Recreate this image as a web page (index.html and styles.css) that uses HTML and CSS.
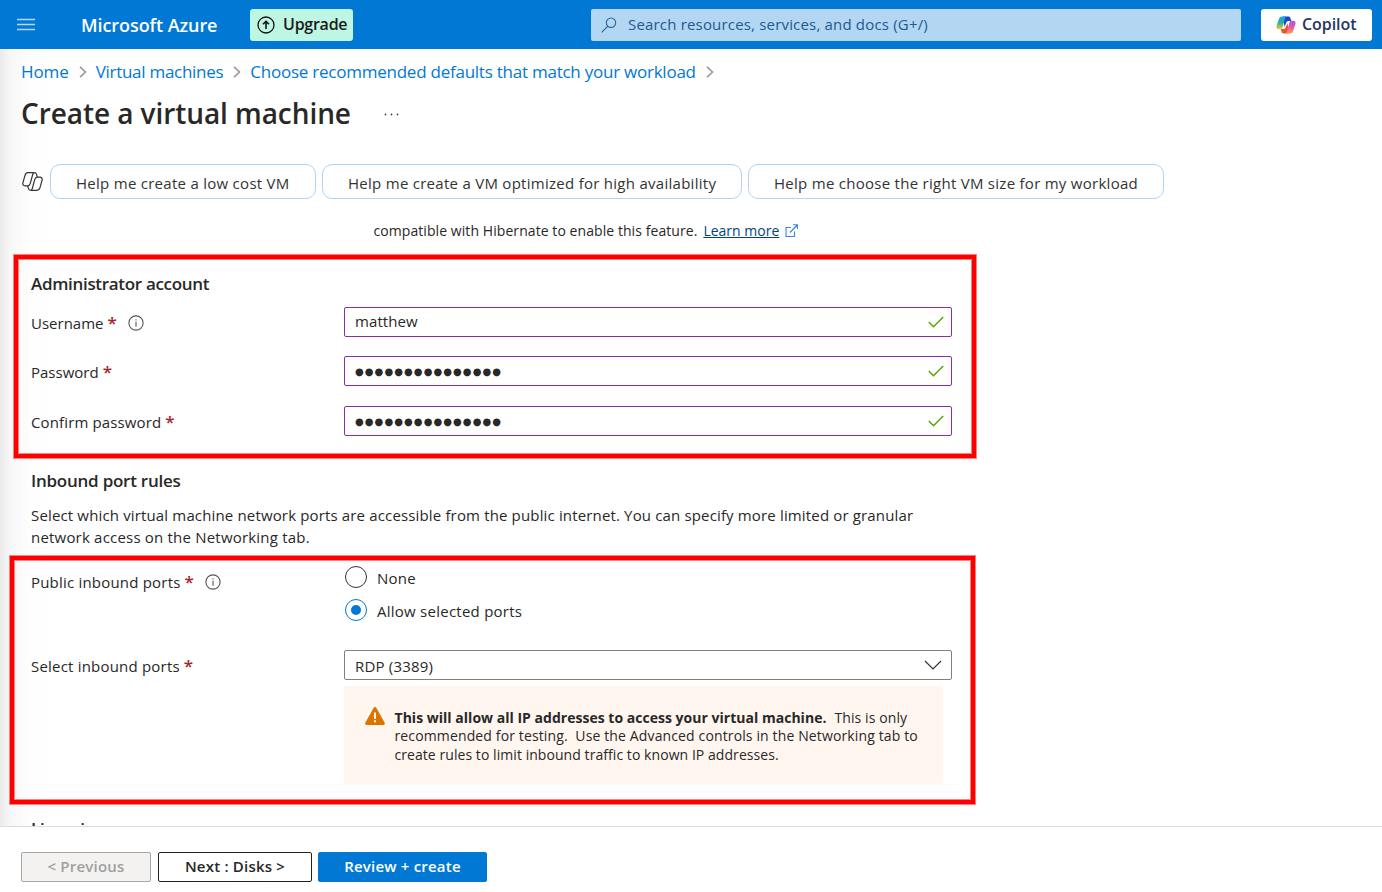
FILE: index.html
```html
<!DOCTYPE html>
<html lang="en">
<head>
<meta charset="utf-8">
<title>Create a virtual machine - Microsoft Azure</title>
<link rel="stylesheet" href="styles.css">
</head>
<body>
<header class="topbar">
  <svg class="menu" viewBox="0 0 18 13"><path d="M0 1.500h18M0 6.500h18M0 11.500h18" fill="none" stroke="#b5d8f5" stroke-width="1.400"/></svg>
  <span class="brand"><span class="t t-brand">Microsoft Azure</span></span>
  <button class="upgrade">
    <svg viewBox="0 0 18 18" fill="none" stroke="#111" stroke-width="1.300"><circle cx="9" cy="9" r="8"/><path d="M9 13V5.500M6 8.300l3-3 3 3" stroke-width="1.600"/></svg>
    <span class="t t-upgrade">Upgrade</span>
  </button>
  <div class="search">
    <svg viewBox="0 0 16 16" fill="none" stroke="#2a6397" stroke-width="1.100"><circle cx="10" cy="5.700" r="4.700"/><path d="M6.800 9.200L.7 15.300"/></svg>
    <span class="t t-search">Search resources, services, and docs (G+/)</span>
  </div>
  <button class="copilot">
    <svg viewBox="0 0 20 18">
      <defs>
        <linearGradient id="ga" x1="0" y1="0" x2="0" y2="1"><stop offset="0" stop-color="#1aa5ee"/><stop offset=".5" stop-color="#2fae9c"/><stop offset="1" stop-color="#f3cf22"/></linearGradient>
        <linearGradient id="gb" x1="0" y1="0" x2="0" y2="1"><stop offset="0" stop-color="#a75be8"/><stop offset=".5" stop-color="#e8579c"/><stop offset="1" stop-color="#ff9a5a"/></linearGradient>
      </defs>
      <path d="M7 .5h5.200c1.200 0 1.900.6 2.200 1.700l.9 2.800h-2.800c-1.400 0-2 .7-2.400 2L8.500 11z" fill="#1b48c4"/>
      <path d="M13 17.500H7.800c-1.200 0-1.900-.6-2.200-1.700L4.700 13h2.800c1.400 0 2-.7 2.400-2l1.600-4z" fill="#f0522e"/>
      <path d="M6 .5h4.600c-1 .4-1.400 1.200-1.700 2.200L6.700 11c-.4 1.500-1 2.200-2.500 2.200H2.800C.8 13.200 0 11.800.6 9.800L3 2.700C3.500 1.200 4.500.5 6 .5z" fill="url(#ga)"/>
      <path d="M14 17.500H9.400c1-.4 1.400-1.200 1.700-2.200L13.300 7c.4-1.500 1-2.200 2.500-2.200h1.400c2 0 2.800 1.400 2.200 3.400L17 15.300c-.5 1.500-1.500 2.200-3 2.200z" fill="url(#gb)"/>
    </svg>
    <span class="t t-copilot">Copilot</span>
  </button>
</header>

<main class="page">
  <nav class="crumbs">
    <a class="t t-c1">Home</a>
    <svg class="sep" viewBox="0 0 8 12"><path d="M1 .8L6.500 6 1 11.200"/></svg>
    <a class="t t-c2">Virtual machines</a>
    <svg class="sep" viewBox="0 0 8 12"><path d="M1 .8L6.500 6 1 11.200"/></svg>
    <a class="t t-c3">Choose recommended defaults that match your workload</a>
    <svg class="sep" viewBox="0 0 8 12"><path d="M1 .8L6.500 6 1 11.200"/></svg>
  </nav>
  <div class="title-row">
    <h1 class="t t-title">Create a virtual machine</h1>
    <svg class="dots" viewBox="0 0 15 3"><circle cx="1.500" cy="1.500" r=".9"/><circle cx="7.500" cy="1.500" r=".9"/><circle cx="13.500" cy="1.500" r=".9"/></svg>
  </div>
  <div class="chips">
    <svg class="chip-icon" viewBox="0 0 21 19" fill="none" stroke="#333" stroke-width="1.200"><path d="M6 .7h6.500c-1 .2-1.500.8-1.800 1.800L8.200 11.700c-.4 1.400-1.200 2.100-2.600 2.100H3.200C1.300 13.800.4 12.500.9 10.800L3 3.300C3.500 1.500 4.500.7 6 .7z"/><path d="M15 18.300H8.500c1-.2 1.500-.8 1.800-1.800l2.500-9.200c.4-1.400 1.200-2.100 2.600-2.100h2.400c1.900 0 2.800 1.300 2.300 3L18 15.700c-.5 1.800-1.500 2.600-3 2.600z"/><path d="M12.500.7c1.200 0 1.700.7 2 1.700l.8 2.800M8.500 18.300c-1.200 0-1.700-.7-2-1.700l-.8-2.800"/></svg>
    <button class="chip chip-a"><span class="t t-k1">Help me create a low cost VM</span></button>
    <button class="chip chip-b"><span class="t t-k2">Help me create a VM optimized for high availability</span></button>
    <button class="chip chip-c"><span class="t t-k3">Help me choose the right VM size for my workload</span></button>
  </div>

  <p class="hibernate"><span class="t t-hib">compatible with Hibernate to enable this feature.</span><a class="t t-learn">Learn more</a><svg viewBox="0 0 13 13" fill="none" stroke="#3b82e8" stroke-width="1.100"><path d="M6 3.500H1v9h8.500v-5M5 8.500L12.200 1M8 .7h4.400V5"/></svg></p>

  <section class="mark mark-account">
    <h2 class="t t-h1">Administrator account</h2>
    <div class="field first">
      <label><span class="t t-l1">Username</span><b class="req">*</b><svg class="info" viewBox="0 0 16 16"><circle cx="8" cy="8" r="7.100"/><path d="M8 6.800v5M8 4.200v1.300"/></svg></label>
      <div class="input"><span class="t t-user">matthew</span><svg class="check" viewBox="0 0 16 12"><path d="M.8 6l4.700 4.700L15.200 1"/></svg></div>
    </div>
    <div class="field">
      <label><span class="t t-l2">Password</span><b class="req">*</b></label>
      <div class="input"><span class="secret">●●●●●●●●●●●●●●●</span><svg class="check" viewBox="0 0 16 12"><path d="M.8 6l4.700 4.700L15.200 1"/></svg></div>
    </div>
    <div class="field">
      <label><span class="t t-l3">Confirm password</span><b class="req">*</b></label>
      <div class="input"><span class="secret">●●●●●●●●●●●●●●●</span><svg class="check" viewBox="0 0 16 12"><path d="M.8 6l4.700 4.700L15.200 1"/></svg></div>
    </div>
  </section>

  <section class="rules">
    <h2 class="t t-h2">Inbound port rules</h2>
    <p><span class="t t-p1">Select which virtual machine network ports are accessible from the public internet. You can specify more limited or granular</span><br><span class="t t-p2">network access on the Networking tab.</span></p>
  </section>

  <section class="mark mark-ports">
    <div class="port-field">
      <label><span class="t t-l4">Public inbound ports</span><b class="req">*</b><svg class="info" viewBox="0 0 16 16"><circle cx="8" cy="8" r="7.100"/><path d="M8 6.800v5M8 4.200v1.300"/></svg></label>
      <div class="radios">
        <div class="radio"><i></i><span class="t t-r1">None</span></div>
        <div class="radio on"><i></i><span class="t t-r2">Allow selected ports</span></div>
      </div>
    </div>
    <div class="field select-field">
      <label><span class="t t-l5">Select inbound ports</span><b class="req">*</b></label>
      <div class="input select"><span class="t t-rdp">RDP (3389)</span><svg class="chev" viewBox="0 0 18 10"><path d="M1 1l8 8 8-8"/></svg></div>
    </div>
    <div class="warning">
      <svg viewBox="0 0 20 18"><path d="M8.700.8a1.500 1.500 0 0 1 2.600 0l8.400 14.900a1.500 1.500 0 0 1-1.300 2.200H1.600a1.500 1.500 0 0 1-1.300-2.200z" fill="#db7500"/><path d="M10 5.500v6.200M10 13.200v2" stroke="#fff" stroke-width="1.900"/></svg>
      <p><b class="t t-w0">This will allow all IP addresses to access your virtual machine.</b><span class="t t-w1">This is only</span><br><span class="t t-w2">recommended for testing.&nbsp; Use the Advanced controls in the Networking tab to</span><br><span class="t t-w3">create rules to limit inbound traffic to known IP addresses.</span></p>
    </div>
  </section>
  <div class="cut"><h2 class="t t-h3">Licensing</h2></div>
</main>

<footer class="actions">
  <button class="btn prev"><span class="t">&lt; Previous</span></button>
  <button class="btn next"><span class="t">Next : Disks &gt;</span></button>
  <button class="btn review"><span class="t">Review + create</span></button>
</footer>
</body>
</html>
```
FILE: styles.css
```css
* { box-sizing: border-box; }
body { margin: 0; width: 1382px; height: 892px; overflow: hidden; display: flex; flex-direction: column; background: #fff; color: #292827; font-family: "Open Sans", "Noto Sans", sans-serif; font-size: 15px; }
h1, h2, p { margin: 0; font-size: inherit; }
button { font: inherit; margin: 0; padding: 0; border: 0; }
svg { display: block; flex: none; }
.t { white-space: nowrap; }

.topbar { flex: none; height: 49px; background: #0078d4; display: flex; align-items: center; padding: 0 10px 0 17px; }
.menu { width: 18px; height: 13px; }
.brand { width: 169px; margin-left: 46px; color: #fff; font-size: 18px; font-weight: 600; letter-spacing: -.07px; }
.upgrade { width: 103px; height: 32px; background: #bdf6e3; border-radius: 3px; display: flex; align-items: center; padding-left: 7px; gap: 8px; color: #1b1b1b; font-size: 16px; font-weight: 600; letter-spacing: -.25px; }
.upgrade svg { width: 18px; height: 18px; }
.upgrade .t, .copilot .t { margin-top: -2px; }
.search { width: 650px; height: 32px; margin-left: 238px; background: #b3d7f2; border-radius: 2px; display: flex; align-items: center; padding-left: 10px; gap: 11px; color: #205a91; }
.search svg { width: 16px; height: 16px; }
.t-search { letter-spacing: .18px; margin-top: -2px; }
.copilot { width: 111px; height: 32px; margin-left: 20px; background: #fff; border-radius: 3px; display: flex; align-items: center; padding-left: 15px; gap: 6px; color: #26355f; font-size: 16px; font-weight: 600; letter-spacing: -.07px; }
.copilot svg { width: 20px; height: 18px; }

.page { flex: none; height: 777px; overflow: hidden; background: linear-gradient(90deg, #ebebeb 0, #f7f7f7 10px, #fdfdfd 28px, #fff 50px); }
.crumbs { height: 46px; display: flex; align-items: center; padding-left: 21px; font-size: 17px; color: #0078d4; }
.crumbs .t { margin-top: -1px; }
.t-c1 { letter-spacing: -.1px; }
.t-c2 { letter-spacing: -.28px; }
.t-c3 { letter-spacing: -.24px; }
.sep { width: 8px; height: 12px; margin: 0 9px 0 10px; fill: none; stroke: #999; stroke-width: 1.600; }
.title-row { height: 38px; display: flex; align-items: center; padding-left: 21px; }
.t-title { font-size: 28px; font-weight: 600; width: 363px; letter-spacing: -.07px; margin-top: -2px; }
.dots { width: 15px; height: 3px; fill: #444; }
.chips { height: 35px; margin-top: 31px; padding-left: 22px; display: flex; align-items: center; }
.chip-icon { width: 21px; height: 19px; margin-right: 7px; }
.chip { height: 35px; border: 1px solid #b0d3f8; border-radius: 10px; background: transparent; padding: 3px 0 0 25px; text-align: left; color: #333; margin-right: 6px; letter-spacing: .275px; }
.chip-a { width: 266px; }
.chip-b { width: 420px; }
.chip-c { width: 416px; }
.hibernate { height: 56px; padding: 7px 0 0 373.500px; display: flex; align-items: center; font-size: 14px; }
.t-hib { letter-spacing: .07px; }
.t-learn { color: #004578; text-decoration: underline; margin-left: 6px; }
.hibernate svg { width: 13px; height: 13px; margin: -1px 0 0 6px; }

.mark { border: 4px solid #f00; box-shadow: 0 0 0 1px #ff8080, inset 0 0 0 1px #ff8080; }
.mark-account { width: 962px; height: 203px; margin-left: 14px; padding: 13px 0 0 13px; }
h2 { font-size: 17px; font-weight: 600; line-height: 24px; letter-spacing: -.32px; }
.t-h2 { letter-spacing: -.24px; }
.field { display: flex; height: 50px; }
.field.first { height: 49px; }
.mark-account h2 { margin-bottom: 11px; }
label { width: 313px; height: 32px; display: flex; align-items: center; }
.t-l3 { letter-spacing: .13px; }
.t-l4, .t-l5 { letter-spacing: .2px; }
.req { color: #a4262c; font-size: 17px; font-weight: 600; line-height: 20px; margin-left: 4px; }
.info { width: 16px; height: 16px; margin-left: 11.500px; fill: none; stroke: #555; stroke-width: 1.100; }
.input { width: 608px; height: 30px; border: 1px solid #8a2da5; border-radius: 2px; background: #fff; display: flex; align-items: center; justify-content: space-between; padding: 0 7px 0 10px; }
.t-user { margin-top: -2px; letter-spacing: .08px; }
.check { width: 16px; height: 12px; margin-top: -1px; fill: none; stroke: #57a300; stroke-width: 1.400; }
.secret { font-family: "DejaVu Sans", sans-serif; font-size: 10px; letter-spacing: 1.080px; margin-top: 1px; }
.rules { height: 98px; padding: 11px 0 0 31px; }
.rules p { margin-top: 11px; line-height: 22px; }
.t-p1 { letter-spacing: .152px; }
.t-p2 { letter-spacing: .2px; }
.mark-ports { width: 965px; height: 248px; margin-left: 10px; padding: 4px 0 0 17px; }
.port-field { height: 86px; display: flex; }
.port-field label { height: 35px; }
.radios { margin-top: -3px; }
.radio { display: flex; align-items: center; gap: 10px; height: 33px; letter-spacing: .25px; }
.radio i { width: 22px; height: 22px; border: 1.500px solid #333; border-radius: 50%; margin: -2px 0 0 1px; display: grid; place-items: center; }
.radio.on i { border-color: #0078d4; }
.radio.on i::after { content: ""; width: 10px; height: 10px; border-radius: 50%; background: #0078d4; }
.select-field { height: 36px; }
.select { border-color: #83817f; padding-right: 9px; }
.t-rdp { letter-spacing: .2px; margin-top: 1px; }
.chev { width: 18px; height: 10px; fill: none; stroke: #333; stroke-width: 1.200; }
.warning { width: 599px; height: 98px; margin-left: 313px; background: #fff6f0; border-radius: 2px; padding: 21px 0 0 21px; display: flex; gap: 9.500px; font-size: 14px; }
.warning svg { width: 20px; height: 18px; }
.warning p { line-height: 18.500px; margin-top: 1.500px; }
.t-w0 { letter-spacing: .02px; }
.t-w1 { margin-left: 8px; letter-spacing: .1px; }
.t-w2 { letter-spacing: .132px; }
.t-w3 { letter-spacing: .06px; }
.cut { padding: 13px 0 0 31px; }

.actions { flex: none; height: 66px; border-top: 1px solid #dcdcdc; padding: 25px 0 0 21px; display: flex; }
.btn { height: 30px; border: 1px solid #222; border-radius: 2px; background: #fff; font-weight: 600; color: #292827; letter-spacing: .2px; padding-bottom: 2px; }
.prev { width: 130px; border-color: #a8a6a4; background: #f3f2f1; color: #a19f9d; }
.next { width: 154px; margin: 0 6px 0 7px; }
.review { width: 169px; border-color: #0078d4; background: #0078d4; color: #fff; }
```
